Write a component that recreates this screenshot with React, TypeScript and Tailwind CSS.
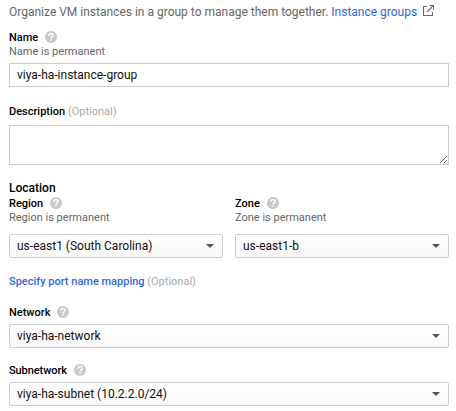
import type { ReactNode } from "react";

function HelpIcon() {
  return (
    <svg className="ml-[7px] size-3 shrink-0" viewBox="0 0 12 12" aria-hidden="true">
      <circle cx="6" cy="6" r="6" fill="#c8c8c8" />
      <path d="M3.9 4.8C3.9 3.3 4.8 2.5 6 2.5s2.1.8 2.1 2C8.1 5.9 6 6 6 7.6" fill="none" stroke="#fff" strokeWidth="1.5" />
      <path d="M5.25 8.3h1.5v1.5h-1.5z" fill="#fff" />
    </svg>
  );
}

function Label({ children, optional, help }: { children: ReactNode; optional?: boolean; help?: boolean }) {
  return (
    <div className="flex h-[14px] items-center text-[11px] leading-[14px] font-medium whitespace-pre text-black">
      <span className="pt-0.5">{children}</span>
      {optional && <span className="pt-0.5 font-normal text-[#aaa]"> (Optional)</span>}
      {help && <HelpIcon />}
    </div>
  );
}

function Hint({ children }: { children: ReactNode }) {
  return <div className="h-[14px] pt-px text-[11px] leading-[14px] text-[#666]">{children}</div>;
}

function Select({ value }: { value: string }) {
  return (
    <button className="flex h-6 w-full items-center justify-between rounded-[2px] border border-[#ccc] bg-linear-to-b from-white to-[#f8f8f8] pr-2 pl-[7px] text-left text-[12px] leading-[22px] text-[#111]">
      <span>{value}</span>
      <svg className="h-1 w-2" viewBox="0 0 8 4" aria-hidden="true">
        <path d="M0 0h8L4 4z" fill="#555" />
      </svg>
    </button>
  );
}

export default function App() {
  return (
    <main className="h-[411px] w-[456px] overflow-hidden bg-white pt-1 pr-[7px] pl-[9px] font-['Roboto',sans-serif]">
      <p className="flex h-4 items-center text-[12px] leading-4 whitespace-pre text-[#666]">
        Organize VM instances in a group to manage them together. <a className="text-[#3367d6]">Instance groups</a>
        <svg className="mb-[3px] ml-[6px] h-[11px] w-[11px]" viewBox="0 0 11 11" fill="none" stroke="#666" strokeWidth="1.1" aria-hidden="true">
          <path d="M4 1.5H.5v9h9V7M4 7l6-6M6.5.5h4v4" />
        </svg>
      </p>

      <section className="mt-[10px]">
        <Label help>Name</Label>
        <Hint>Name is permanent</Hint>
        <input
          className="mt-[5px] block h-6 w-full border border-[#ccc] px-[7px] text-[12px] text-[#111] outline-none"
          defaultValue="viya-ha-instance-group"
        />
      </section>

      <section className="mt-[17px]">
        <Label optional>Description</Label>
        <textarea className="mt-[7px] block h-10 w-full resize border border-[#ccc] outline-none" />
      </section>

      <section className="mt-[15px]">
        <h2 className="h-4 text-[12px] leading-4 font-medium text-black">Location</h2>
        <div className="grid grid-cols-2 gap-3">
          <div>
            <Label help>Region</Label>
            <Hint>Region is permanent</Hint>
            <div className="mt-[10px]">
              <Select value="us-east1 (South Carolina)" />
            </div>
          </div>
          <div>
            <Label help>Zone</Label>
            <Hint>Zone is permanent</Hint>
            <div className="mt-[10px]">
              <Select value="us-east1-b" />
            </div>
          </div>
        </div>
      </section>

      <section className="mt-4">
        <Label optional>
          <a className="text-[#3367d6]">Specify port name mapping</a>
        </Label>
      </section>

      <section className="mt-[17px]">
        <Label help>Network</Label>
        <div className="mt-[5px]">
          <Select value="viya-ha-network" />
        </div>
      </section>

      <section className="mt-[15px]">
        <Label help>
          <span className="tracking-[-0.08px]">Subnetwork</span>
        </Label>
        <div className="mt-[5px]">
          <Select value="viya-ha-subnet (10.2.2.0/24)" />
        </div>
      </section>
    </main>
  );
}
